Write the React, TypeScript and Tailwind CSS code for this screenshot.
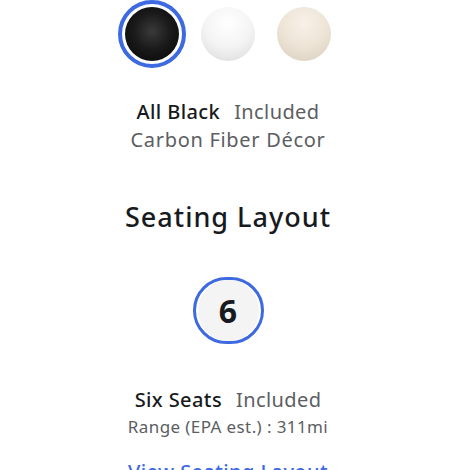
import React from "react";

// Interior colour swatches + seating layout picker, centred column.
const swatches = [
  {
    id: "black",
    selected: true,
    cls: "bg-[radial-gradient(circle_at_50%_45%,#3a3a3a_0%,#1a1a1a_45%,#050505_100%)]",
  },
  {
    id: "white",
    selected: false,
    cls: "bg-[radial-gradient(circle_at_50%_30%,#ffffff_0%,#f4f4f4_50%,#d9d9d9_100%)]",
  },
  {
    id: "cream",
    selected: false,
    cls: "bg-[radial-gradient(circle_at_50%_30%,#f7f1e8_0%,#ede4d6_50%,#d8cdbd_100%)]",
  },
];

export default function App() {
  return (
    <div
      className="w-[456px] h-[470px] overflow-hidden bg-white flex flex-col items-center text-[#171a20]"
      style={{ fontFamily: '"Noto Sans", Arial, sans-serif' }}
    >
      <div className="flex items-center gap-[8px]">
        {swatches.map((s) => (
          <div
            key={s.id}
            className={`w-[68px] h-[68px] rounded-full flex items-center justify-center ${
              s.selected ? "border-[4px] border-[#3e6ae1]" : ""
            }`}
          >
            <div className={`w-[54px] h-[54px] rounded-full ${s.cls}`} />
          </div>
        ))}
      </div>

      <div className="mt-[32px] flex items-baseline gap-[14px] text-[20px] leading-[24px] tracking-[0.4px]">
        <span className="font-medium">All Black</span>
        <span className="text-[#5c5e62]">Included</span>
      </div>
      <div className="mt-[4px] text-[20px] leading-[24px] tracking-[0.7px] text-[#5c5e62]">
        Carbon Fiber Décor
      </div>

      <h2 className="mt-[49px] text-[27px] leading-[32px] tracking-[1px] font-medium">
        Seating Layout
      </h2>

      <div className="mt-[44px] w-[71px] h-[71px] rounded-full border-[3px] border-[#3e6ae1] flex items-center justify-center">
        <div className="w-[61px] h-[61px] rounded-full bg-[#f4f4f4] flex items-center justify-center text-[32px] font-bold">
          6
        </div>
      </div>

      <div className="mt-[44px] flex items-baseline gap-[14px] text-[20px] leading-[24px] tracking-[0.4px]">
        <span className="font-medium">Six Seats</span>
        <span className="text-[#5c5e62]">Included</span>
      </div>
      <div className="mt-[4px] text-[17px] leading-[22px] tracking-[0.4px] text-[#5c5e62]">
        Range (EPA est.) : 311mi
      </div>

      <a className="mt-[22px] text-[20px] leading-[24px] tracking-[0.4px] font-medium text-[#3e6ae1]">
        View Seating Layout
      </a>
    </div>
  );
}
